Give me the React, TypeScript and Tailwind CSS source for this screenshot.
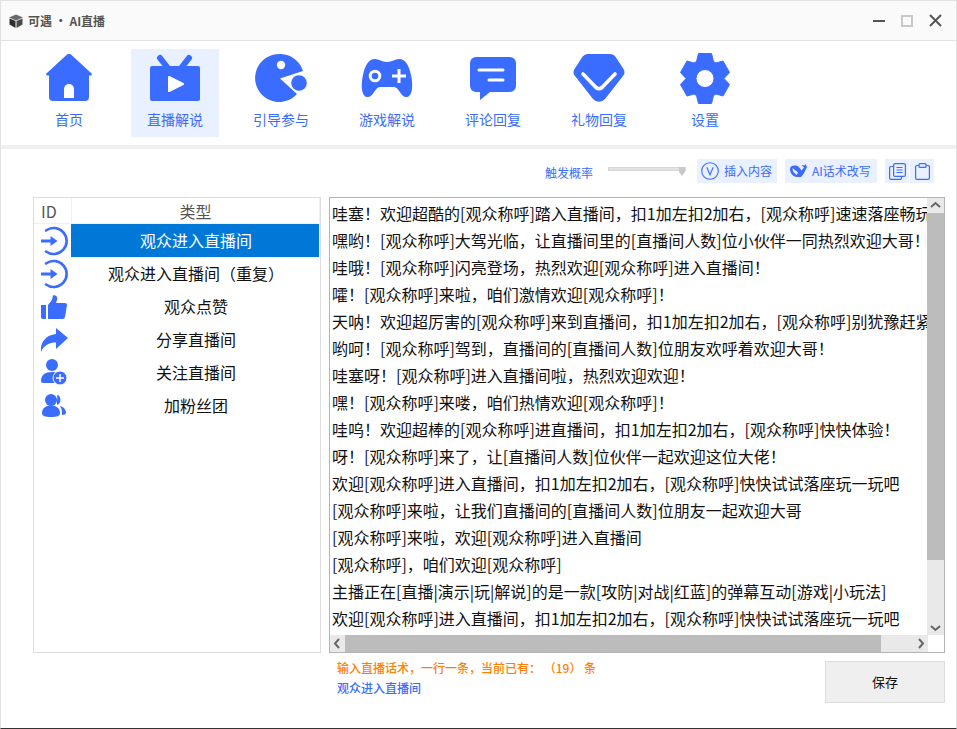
const FONT = "font-['Noto_Sans_CJK_SC','Liberation_Sans',sans-serif]";

// the strings below are written with plain punctuation, the app shows the full-width forms
const fw = (s: string) =>
  s
    .replace(/!/g, '\uFF01')
    .replace(/,/g, '\uFF0C')
    .replace(/:/g, '\uFF1A')
    .replace(/\(/g, '\uFF08')
    .replace(/\)/g, '\uFF09');

function HomeIcon() {
  return (
    <svg width="48" height="48" viewBox="0 0 48 48">
      <path fill="#3a6cff" d="M21.5 1 a3.5 3.5 0 0 1 5 0 L46.6 19.5 a1.2 1.2 0 0 1 -.8 2 H44 V43 a4 4 0 0 1 -4 4 H8 a4 4 0 0 1 -4 -4 V21.5 H2.2 a1.2 1.2 0 0 1 -.8 -2 Z" />
      <path fill="#fff" d="M19 44 V35 a5 5 0 0 1 10 0 V44 Z" />
    </svg>
  );
}

function TvIcon() {
  return (
    <svg width="50" height="48" viewBox="0 0 50 48">
      <path stroke="#3a6cff" strokeWidth="6" strokeLinecap="round" d="M10 4 L17 13 M39 4 L32 13" fill="none" />
      <rect x="0" y="12" width="50" height="35" rx="2" fill="#3a6cff" />
      <path fill="#fff" stroke="#fff" strokeWidth="2" strokeLinejoin="round" d="M19 23 L33 30 L19 37 Z" />
    </svg>
  );
}

function PacmanIcon() {
  return (
    <svg width="52" height="48" viewBox="0 0 52 48">
      <path fill="#3a6cff" d="M24 0 A24 24 0 0 1 48 17 L25 24.5 L42 40 A24 24 0 1 1 24 0 Z" />
      <circle cx="26" cy="11" r="4.2" fill="#fff" />
      <circle cx="44" cy="29" r="7.8" fill="#3a6cff" />
    </svg>
  );
}

function GamepadIcon() {
  return (
    <svg width="52" height="40" viewBox="0 0 52 40">
      <path fill="#3a6cff" d="M14 1 C18 1 21 4 26 4 C31 4 34 1 38 1 C45 1 48 8 50 17 C52 26 52 38 46 39 C40 40 38 29 33 29 H19 C14 29 12 40 6 39 C0 38 0 26 2 17 C4 8 7 1 14 1 Z" />
      <circle cx="14" cy="18" r="4.8" fill="none" stroke="#fff" strokeWidth="3" />
      <path stroke="#fff" strokeWidth="3" d="M31 18 H45 M38 11 V25" fill="none" />
    </svg>
  );
}

function CommentIcon() {
  return (
    <svg width="46" height="43" viewBox="0 0 46 43">
      <path fill="#3a6cff" d="M6 0 H40 A6 6 0 0 1 46 6 V29 A6 6 0 0 1 40 35 H20 L10 43 V35 H6 A6 6 0 0 1 0 29 V6 A6 6 0 0 1 6 0 Z" />
      <path stroke="#fff" strokeWidth="3" strokeLinecap="round" d="M9 13 H33 M19 23 H33" fill="none" />
    </svg>
  );
}

function GiftIcon() {
  return (
    <svg width="52" height="48" viewBox="0 0 52 48">
      <path fill="#3a6cff" d="M15 0 H37 A7 7 0 0 1 43 3.5 L50.5 15 A6 6 0 0 1 50 22 L32 45 A8 8 0 0 1 20 45 L2 22 A6 6 0 0 1 1.5 15 L9 3.5 A7 7 0 0 1 15 0 Z" />
      <path stroke="#fff" strokeWidth="3.6" strokeLinecap="round" strokeLinejoin="round" d="M10 20 L23 33.5 Q26 36 29 33.5 L42 20" fill="none" />
    </svg>
  );
}

function GearIcon() {
  return (
    <svg width="50" height="51" viewBox="0 0 50 51">
      <path
        fill="#3a6cff"
        stroke="#3a6cff"
        strokeWidth="1"
        strokeLinejoin="round"
        fillRule="evenodd"
        d="M18.5 .5 H31.5 L33.5 8.5 L36 10 L43 8 L49.5 19.5 L44 25.5 L49.5 31.5 L43 43 L36 41 L33.5 42.5 L31.5 50.5 H18.5 L16.5 42.5 L14 41 L7 43 L.5 31.5 L6 25.5 L.5 19.5 L7 8 L14 10 L16.5 8.5 Z M25 16.5 A9 9 0 1 0 25 34.5 A9 9 0 1 0 25 16.5 Z"
      />
    </svg>
  );
}

function EnterIcon() {
  return (
    <svg width="30" height="30" viewBox="0 0 30 30" fill="none" stroke="#3a6cff" strokeWidth="2.6">
      <path d="M7 4.5 A13 13 0 1 1 7 25.5" strokeLinecap="round" />
      <path d="M2 15 H13" strokeWidth="3" />
      <path fill="#3a6cff" stroke="none" d="M11.5 10 L18.5 15 L11.5 20 Z" />
    </svg>
  );
}

function ThumbIcon() {
  return (
    <svg width="26" height="24" viewBox="0 0 26 24" fill="#3a6cff">
      <path d="M0 10 H5 V24 H2 A2 2 0 0 1 0 22 Z" />
      <path d="M7 10 L11 5 L12 0.5 C15 -0.5 17 2 16 5 L15 8 H24 A2 2 0 0 1 26 10 L24 22 A2.5 2.5 0 0 1 21.5 24 H7 Z" />
    </svg>
  );
}

function ShareIcon() {
  return (
    <svg width="28" height="24" viewBox="0 0 28 24" fill="#3a6cff">
      <path d="M16 0 L28 10 L16 21 V14.5 C9 14.5 4 17 1 24 C0 14 6 7 16 6 Z" />
    </svg>
  );
}

function UserAddIcon() {
  return (
    <svg width="27" height="27" viewBox="0 0 27 27">
      <circle cx="11" cy="6" r="6" fill="#3a6cff" />
      <path fill="#3a6cff" d="M0 22 C0 16 4 13 11 13 C15 13 18 14 20 16 L14 24 H2 A2 2 0 0 1 0 22 Z" />
      <circle cx="19" cy="19" r="7" fill="#3a6cff" stroke="#fff" strokeWidth="1" />
      <path stroke="#fff" strokeWidth="1.5" d="M15 19 H23 M19 15 V23" />
    </svg>
  );
}

function FansIcon() {
  return (
    <svg width="24" height="23" viewBox="0 0 24 23" fill="#3a6cff">
      <circle cx="9" cy="6" r="6" />
      <path d="M0 19 C0 14 4 11.5 9 11.5 C14 11.5 18 14 18 19 C18 22 15 23 9 23 C3 23 0 22 0 19 Z" />
      <path d="M15 1 C19 1 20 9 15.5 11 C14 8 16 4 15 1 Z" />
      <path d="M18 12 C22 13 24 16 24 19 C24 20 22 21 20 21 C20 18 20 15 18 12 Z" />
    </svg>
  );
}

function VCircleIcon() {
  return (
    <svg width="18" height="18" viewBox="0 0 18 18" fill="none" stroke="#3a6cff" strokeWidth="1.1">
      <circle cx="9" cy="9" r="8.3" />
      <path d="M5.8 5.2 L9 12.8 L12.2 5.2" />
    </svg>
  );
}

function WhaleIcon() {
  return (
    <svg width="17" height="14" viewBox="0 0 17 14" fill="#3a6cff">
      <path d="M0 5 C0 2 3 1 6 1.5 C9 2 10.5 5 11.5 6.5 L14 3.5 L11.5 1 L14.5 1.5 L15.5 0 L17 3 L13.5 10 L11 13 H7 C3 13 0 9 0 5 Z" />
      <path fill="#e9f0ff" d="M2.5 4 L8 8.5 L6.5 11 L3 7.5 Z" />
    </svg>
  );
}

function CopyDocIcon() {
  return (
    <svg width="17" height="17" viewBox="0 0 17 17" fill="none" stroke="#3a6cff" strokeWidth="1.2">
      <rect x="4.6" y=".6" width="11.8" height="12.8" rx="1.5" fill="#e9f0ff" />
      <path d="M4.6 3.5 H2 A1.4 1.4 0 0 0 .6 5 V15 A1.4 1.4 0 0 0 2 16.4 H11 A1.4 1.4 0 0 0 12.5 15 V13.4" />
      <path d="M7.5 4.5 H13.5 M7.5 7 H13.5 M7.5 9.5 H13.5" />
    </svg>
  );
}

function ClipDocIcon() {
  return (
    <svg width="15" height="17" viewBox="0 0 15 17" fill="none" stroke="#3a6cff" strokeWidth="1.2">
      <path d="M4 2.5 H2 A1.4 1.4 0 0 0 .6 4 V15 A1.4 1.4 0 0 0 2 16.4 H13 A1.4 1.4 0 0 0 14.4 15 V4 A1.4 1.4 0 0 0 13 2.5 H11" />
      <rect x="4" y=".6" width="7" height="3.8" rx="1" />
    </svg>
  );
}

const navItems = [
  { label: '首页', icon: <HomeIcon /> },
  { label: '直播解说', icon: <TvIcon />, active: true },
  { label: '引导参与', icon: <PacmanIcon /> },
  { label: '游戏解说', icon: <GamepadIcon /> },
  { label: '评论回复', icon: <CommentIcon /> },
  { label: '礼物回复', icon: <GiftIcon /> },
  { label: '设置', icon: <GearIcon /> },
];

const typeRows = [
  { icon: <EnterIcon />, label: '观众进入直播间', selected: true },
  { icon: <EnterIcon />, label: '观众进入直播间(重复)' },
  { icon: <ThumbIcon />, label: '观众点赞' },
  { icon: <ShareIcon />, label: '分享直播间' },
  { icon: <UserAddIcon />, label: '关注直播间' },
  { icon: <FansIcon />, label: '加粉丝团' },
];

const lines = [
  '哇塞!欢迎超酷的[观众称呼]踏入直播间,扣1加左扣2加右,[观众称呼]速速落座畅玩',
  '嘿哟![观众称呼]大驾光临,让直播间里的[直播间人数]位小伙伴一同热烈欢迎大哥!',
  '哇哦![观众称呼]闪亮登场,热烈欢迎[观众称呼]进入直播间!',
  '嚯![观众称呼]来啦,咱们激情欢迎[观众称呼]!',
  '天呐!欢迎超厉害的[观众称呼]来到直播间,扣1加左扣2加右,[观众称呼]别犹豫赶紧',
  '哟呵![观众称呼]驾到,直播间的[直播间人数]位朋友欢呼着欢迎大哥!',
  '哇塞呀![观众称呼]进入直播间啦,热烈欢迎欢迎!',
  '嘿![观众称呼]来喽,咱们热情欢迎[观众称呼]!',
  '哇呜!欢迎超棒的[观众称呼]进直播间,扣1加左扣2加右,[观众称呼]快快体验!',
  '呀![观众称呼]来了,让[直播间人数]位伙伴一起欢迎这位大佬!',
  '欢迎[观众称呼]进入直播间,扣1加左扣2加右,[观众称呼]快快试试落座玩一玩吧',
  '[观众称呼]来啦,让我们直播间的[直播间人数]位朋友一起欢迎大哥',
  '[观众称呼]来啦,欢迎[观众称呼]进入直播间',
  '[观众称呼],咱们欢迎[观众称呼]',
  '主播正在[直播|演示|玩|解说]的是一款[攻防|对战|红蓝]的弹幕互动[游戏|小玩法]',
  '欢迎[观众称呼]进入直播间,扣1加左扣2加右,[观众称呼]快快试试落座玩一玩吧',
];

export default function App() {
  return (
    <div className={`w-[957px] h-[729px] bg-white flex flex-col overflow-hidden border-x border-t border-[#e2e2e2] border-b-[#333] border-b ${FONT}`}>
      {/* title bar */}
      <div className="h-[40px] shrink-0 bg-[#fafafa] border-b border-[#e3e3e3] flex items-center pl-[8px] pr-[14px]">
        <svg width="14" height="14" viewBox="0 0 14 14" className="mr-[5px]">
          <path fill="#6a6a6a" d="M7 0.5 L14 3.5 L7 6.5 L0 3.5 Z" />
          <path fill="#2e2e2e" d="M0.5 4.5 L6.5 7 V14 L0.5 10.5 Z" />
          <path fill="#4a4a4a" d="M13.5 4.5 L7.5 7 V14 L13.5 10.5 Z" />
        </svg>
        <span className="text-[12px] font-bold text-[#555]">可遇 • AI直播</span>
        <div className="ml-auto flex items-center gap-[16px]">
          <span className="w-[12px] h-[2px] bg-[#555]" />
          <span className="w-[12px] h-[12px] border-2 border-[#c8c8c8]" />
          <svg width="13" height="13" viewBox="0 0 13 13" stroke="#555" strokeWidth="2"><path d="M1 1 L12 12 M12 1 L1 12" /></svg>
        </div>
      </div>

      {/* nav */}
      <div className="h-[104px] shrink-0 flex gap-[18px] pl-[24px] pt-[8px]">
        {navItems.map((n) => (
          <div key={n.label} className={`w-[88px] h-[88px] flex flex-col items-center ${n.active ? 'bg-[#e9f0ff]' : ''}`}>
            <div className="h-[58px] flex items-center justify-center">{n.icon}</div>
            <span className="mt-[2px] text-[14px] leading-[20px] text-[#3a6cff]">{n.label}</span>
          </div>
        ))}
      </div>
      <div className="h-[4px] shrink-0 bg-[#f0f0f0]" />

      {/* toolbar */}
      <div className="h-[36px] shrink-0 flex items-center pl-[544px] pt-[8px]">
        <span className="text-[12px] text-[#3a6cff] mt-[3px]">触发概率</span>
        <div className="ml-[15px] w-[78px] h-[4px] bg-[#e2e2e2] border border-[#d6d6d6] relative -mt-[5px]">
          <svg width="6" height="9" viewBox="0 0 6 9" className="absolute right-0 -top-[1px]"><path fill="#c8c8c8" d="M0 0 H6 V5 L3 9 L0 5 Z" /></svg>
        </div>
        <div className="ml-[11px] w-[80px] h-[24px] bg-[#e9f0ff] flex items-center pl-[4px] gap-[5px]">
          <VCircleIcon />
          <span className="text-[12px] text-[#3a6cff]">插入内容</span>
        </div>
        <div className="ml-[8px] w-[92px] h-[24px] bg-[#e9f0ff] flex items-center pl-[5px] gap-[5px]">
          <WhaleIcon />
          <span className="text-[12px] text-[#3a6cff] whitespace-nowrap">AI话术改写</span>
        </div>
        <div className="ml-[8px] w-[24px] h-[24px] bg-[#e9f0ff] flex items-center justify-center">
          <CopyDocIcon />
        </div>
        <div className="ml-[1px] w-[24px] h-[24px] bg-[#e9f0ff] flex items-center justify-center">
          <ClipDocIcon />
        </div>
      </div>

      {/* body */}
      <div className="flex pl-[32px] pt-[12px] gap-[8px]">
        {/* type list */}
        <div className="w-[288px] h-[456px] border border-[#dcdcdc] flex flex-col">
          <div className="h-[26px] shrink-0 flex text-[16px] text-[#555] leading-[26px] border-b border-[#f0f0f0]">
            <div className="w-[38px] pl-[7px] border-r border-[#f0f0f0]">ID</div>
            <div className="flex-1 text-center border-r border-[#f0f0f0]">类型</div>
          </div>
          {typeRows.map((r) => (
            <div key={r.label} className="h-[33px] shrink-0 flex">
              <div className="w-[37px] pl-[3px] flex items-center justify-center">{r.icon}</div>
              <div className={`w-[248px] pl-[2px] text-center text-[16px] leading-[33px] ${r.selected ? 'bg-[#0078d7] text-white' : 'text-[#111]'}`}>{fw(r.label)}</div>
            </div>
          ))}
        </div>

        {/* script text */}
        <div className="w-[616px] h-[456px] border border-[#b4b4b4] flex flex-col">
          <div className="flex-1 flex min-h-0">
            <div className="flex-1 overflow-hidden pl-[2px] pt-[2px]">
              {lines.map((l, i) => (
                <div key={i} className="h-[27px] leading-[27px] text-[16px] text-[#111] whitespace-nowrap">{fw(l)}</div>
              ))}
            </div>
            <div className="w-[17px] bg-[#e9e9e9] flex flex-col items-center">
              <svg width="17" height="15" viewBox="0 0 17 15" className="shrink-0"><path d="M4 9 L8.5 5 L13 9" fill="none" stroke="#666" strokeWidth="2" /></svg>
              <div className="w-full h-[347px] bg-[#bcbcbc]" />
              <div className="flex-1" />
              <svg width="17" height="15" viewBox="0 0 17 15" className="shrink-0"><path d="M4 6 L8.5 10 L13 6" fill="none" stroke="#666" strokeWidth="2" /></svg>
            </div>
          </div>
          <div className="h-[17px] shrink-0 flex">
            <div className="w-[598px] bg-[#e9e9e9] flex items-center">
              <svg width="15" height="17" viewBox="0 0 15 17" className="shrink-0"><path d="M9 4 L5 8.5 L9 13" fill="none" stroke="#666" strokeWidth="2" /></svg>
              <div className="w-[536px] h-full bg-[#bcbcbc]" />
              <div className="flex-1" />
              <svg width="15" height="17" viewBox="0 0 15 17" className="shrink-0"><path d="M6 4 L10 8.5 L6 13" fill="none" stroke="#666" strokeWidth="2" /></svg>
            </div>
          </div>
        </div>
      </div>

      {/* footer */}
      <div className="flex pl-[336px] pt-[8px]">
        <div className="w-[488px] -mt-[1px]">
          <div className="text-[12px] leading-[16px] font-medium text-[#ff8000]">{fw('输入直播话术,一行一条,当前已有: (19) 条')}</div>
          <div className="text-[12px] leading-[16px] mt-[4px] font-medium text-[#3a6cff]">观众进入直播间</div>
        </div>
        <div className="w-[120px] h-[42px] bg-[#efefef] border border-[#dcdcdc] flex items-center justify-center text-[13px] text-[#111]">保存</div>
      </div>
    </div>
  );
}
